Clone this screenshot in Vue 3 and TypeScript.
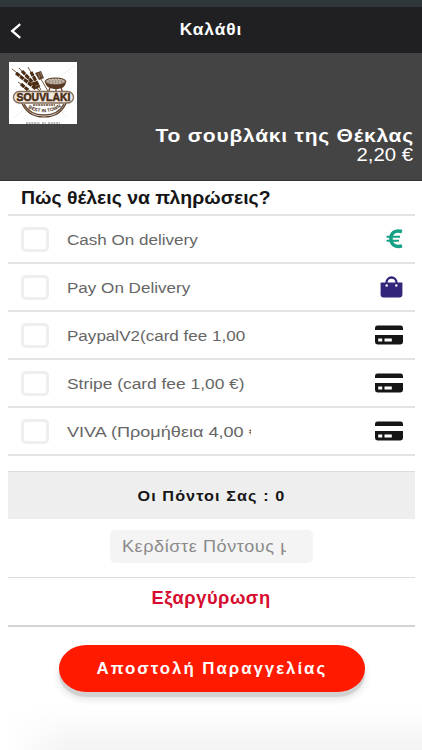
<script setup lang="ts">
type IconName = 'euro' | 'bag' | 'card'

interface PaymentOption {
  id: string
  label: string
  icon: IconName
}

const options: PaymentOption[] = [
  { id: 'cash', label: 'Cash On delivery', icon: 'euro' },
  { id: 'pay', label: 'Pay On Delivery', icon: 'bag' },
  { id: 'paypal', label: 'PaypalV2(card fee 1,00', icon: 'card' },
  { id: 'stripe', label: 'Stripe (card fee 1,00 €)', icon: 'card' },
  { id: 'viva', label: 'VIVA (Προμήθεια 4,00 €)', icon: 'card' },
]
</script>

<template>
  <main class="screen">
    <div class="status"></div>
    <header class="nav">
      <svg class="back" width="12" height="16" viewBox="0 0 12 16">
        <path d="M10.200 1.200 2.200 8l8 6.800" fill="none" stroke="#fff" stroke-width="2.300" />
      </svg>
      <h1 class="nav-title"><span class="t">Καλάθι</span></h1>
    </header>

    <section class="hero">
      <svg class="logo" width="68" height="62" viewBox="0 0 68 62">
        <rect width="68" height="62" fill="#fff" />
        <path d="M66 3 48 17M5 56l10-9M58 55l-8-7" stroke="#e9e7e5" stroke-width=".7" />
        <g stroke="#745a42" stroke-width="1" fill="none">
          <path d="M3 7 31 29M10 6l21 23M19 5l13 23M9 20l12 9M30 14l9 15" />
        </g>
        <g stroke="#4b2c14" stroke-width="3.200" stroke-dasharray="4.500 .7" fill="none">
          <path d="m7 11 20 16M13 9l16 17M22 10l8 15M12 22l7 6" />
        </g>
        <path d="m26 11 6-2 3 7-5 2z" fill="#5b3c25" />
        <path d="m29 11 2 5M31 10l2 5" stroke="#b5a596" stroke-width=".6" />
        <path d="M36 20h21c-1 5-4 7-10 7s-10-2-11-7z" fill="#583821" />
        <ellipse cx="46.500" cy="19.500" rx="10.500" ry="3.500" fill="#a49687" stroke="#583821" />
        <path d="M38 19h17M40 17.500h13M41 21h12" stroke="#e1dad2" stroke-width=".7" stroke-dasharray="2 1" />
        <path d="m41 26-2 5M47 27v4M52 26l2 5" stroke="#583821" stroke-width="1.200" />
        <path d="M12 39c4 11 12 16 23 16s19-5 23-16z" fill="#fff" stroke="#5b3c25" stroke-width="1.200" />
        <path d="M15 42c4 8 11 11 20 11s16-3 20-11" fill="none" stroke="#6c503a" stroke-width="1.600" />
        <path d="M24 43h22" stroke="#8b7664" stroke-width="2" stroke-dasharray="2 .6" />
        <rect x="4.500" y="29.500" width="60" height="11.500" rx="5.700" fill="#eee9e3" stroke="#846c57" stroke-width="1.300" />
        <text x="7.500" y="39" textLength="54" lengthAdjust="spacingAndGlyphs" class="logo-name">SOUVLAKI</text>
        <path id="ribbon" d="M19 46q16 9 33-1" fill="none" />
        <text class="logo-tag"><textPath href="#ribbon">BEST IN TOWN</textPath></text>
        <path d="M17 61h14M33 61h4M39 61h12" stroke="#777" stroke-width="1" stroke-dasharray="2 .7" />
      </svg>
      <div class="item">
        <h2 class="item-name"><span class="t">Το σουβλάκι της Θέκλας</span></h2>
        <p class="item-price"><span class="t">2,20 €</span></p>
      </div>
    </section>

    <section class="payments">
      <h3 class="question"><span class="t">Πώς θέλεις να πληρώσεις?</span></h3>
      <ul class="options">
        <li v-for="option in options" :key="option.id" class="option" :class="option.id">
          <span class="box"></span>
          <span class="label"><span class="t">{{ option.label }}</span></span>
          <svg v-if="option.icon === 'euro'" class="icon" width="17" height="20" viewBox="0 0 17 20">
            <path d="M16 2.500C9 .5 4.900 3.800 4.900 9.500S9 18.800 16 16.900" fill="none" stroke="#16a085" stroke-width="3.500" />
            <path d="M.6 7.700H14M.6 11.800H13" stroke="#16a085" stroke-width="2" />
          </svg>
          <svg v-else-if="option.icon === 'bag'" class="icon" width="23" height="22" viewBox="0 0 23 22">
            <path d="M6.500 10V6.500a5 5 0 0 1 10 0V10" fill="none" stroke="#33267a" stroke-width="2.300" />
            <path d="M1.400 6.500h20.200q.8 0 .8.800v11.200q0 3-3 3H3.600q-3 0-3-3V7.300q0-.8.8-.8z" fill="#33267a" />
            <circle cx="6.700" cy="9.500" r="1.200" fill="#fff" />
            <circle cx="16.300" cy="9.500" r="1.200" fill="#fff" />
          </svg>
          <svg v-else class="icon card" width="28" height="20" viewBox="0 0 28 20">
            <path d="M0 5V3Q0 .6 2.500.6h23Q28 .6 28 3v2z" fill="#161617" />
            <path d="M0 10h28v7q0 2.400-2.500 2.400h-23Q0 19.400 0 17z" fill="#161617" />
            <path d="M3.200 13.500h4v2.900h-4zM9.500 13.500h7.300v2.900H9.500z" fill="#fff" />
          </svg>
        </li>
      </ul>
    </section>

    <section class="points">
      <div class="balance"><span class="t">Οι Πόντοι Σας : 0</span></div>
      <div class="field"><div class="clip"><span class="t">Κερδίστε Πόντους με</span></div></div>
      <div class="redeem"><span class="t">Εξαργύρωση</span></div>
    </section>

    <footer class="footer">
      <button class="submit" type="button"><span class="t">Αποστολή Παραγγελίας</span></button>
    </footer>
  </main>
</template>

<style>
body {
  margin: 0;
  background: #fff;
}
</style>

<style scoped>
.screen {
  width: 422px;
  height: 750px;
  display: flex;
  flex-direction: column;
  overflow: hidden;
  box-sizing: border-box;
  background: #fff;
  color: #161617;
  font-family: "Liberation Sans", Arial, sans-serif;
}
h1, h2, h3, p, ul {
  margin: 0;
  padding: 0;
}
.t {
  display: inline-block;
  white-space: nowrap;
}
.status {
  flex: none;
  height: 7px;
  background: #30373b;
}
.nav {
  flex: none;
  height: 46px;
  display: grid;
  grid-template-columns: 40px 1fr 40px;
  align-items: center;
  background: #202022;
  color: #fff;
}
.back {
  margin: 2px 0 0 10px;
}
.nav-title {
  padding-left: 1px;
  text-align: center;
  font-size: 16px;
  line-height: 20px;
  letter-spacing: 0.9px;
}
.nav-title .t {
  transform: scaleX(1.08);
}
.hero {
  flex: none;
  height: 128px;
  box-sizing: border-box;
  padding: 9px 8px 0 9px;
  background: #444;
  color: #fff;
  border-bottom: 1px solid #333;
}
.logo {
  display: block;
}
.logo-name {
  font: bold 10px "Liberation Sans", Arial, sans-serif;
  fill: #4b2c14;
  stroke: #4b2c14;
  stroke-width: 0.5px;
}
.logo-tag {
  font: bold 4.800px "Liberation Sans", Arial, sans-serif;
  fill: #4b2c14;
}
.item {
  text-align: right;
}
.item .t {
  transform-origin: right;
}
.item-name {
  height: 20px;
  margin-top: 1px;
  font-size: 19px;
  line-height: 22px;
  letter-spacing: 0.7px;
}
.item-name .t {
  transform: scaleX(1.105);
}
.item-price {
  padding-right: 1px;
  font-size: 18px;
  line-height: 20px;
}
.item-price .t {
  transform: scaleX(1.13);
}
.payments {
  flex: none;
  padding: 0 7px 0 8px;
}
.question {
  height: 33px;
  padding-left: 13px;
  font-size: 18px;
  line-height: 34px;
}
.question .t {
  transform: scaleX(1.08);
  transform-origin: left;
}
.options {
  list-style: none;
}
.option {
  height: 48px;
  box-sizing: border-box;
  border-top: 2px solid #e3e3e3;
  padding: 0 12px 0 13px;
  display: flex;
  align-items: center;
}
.option:last-child {
  height: 50px;
  border-bottom: 2px solid #e3e3e3;
}
.box {
  flex: none;
  width: 28px;
  height: 25px;
  box-sizing: border-box;
  border: 3px solid #eee;
  border-radius: 5px;
}
.label {
  width: 184px;
  margin-left: 18px;
  overflow: hidden;
  font-size: 15.500px;
  line-height: 22px;
  padding-top: 1px;
  color: #666;
}
.label .t {
  transform: scaleX(1.1);
  transform-origin: left;
}
.stripe .t {
  transform: scaleX(1.12);
}
.viva .t {
  transform: scaleX(1.167);
}
.icon {
  flex: none;
  margin-left: auto;
}
.points {
  flex: none;
  margin: 15px 7px 0 8px;
  display: flex;
  flex-direction: column;
  align-items: center;
}
.balance {
  align-self: stretch;
  height: 48px;
  box-sizing: border-box;
  border-top: 1px solid #ddd;
  background: #eee;
  text-align: center;
  font-size: 15px;
  font-weight: bold;
  line-height: 48px;
  letter-spacing: 1px;
}
.balance .t {
  transform: scaleX(1.08);
}
.field {
  width: 203px;
  height: 33px;
  box-sizing: border-box;
  margin: 11px 0 14px;
  padding: 0 27px 0 12px;
  border-radius: 5px;
  background: #f4f4f4;
  color: #8b8b8b;
  font-size: 16px;
  line-height: 34px;
  letter-spacing: 0.5px;
}
.clip {
  overflow: hidden;
}
.clip .t {
  transform: scaleX(1.13);
  transform-origin: left;
}
.redeem {
  align-self: stretch;
  height: 50px;
  box-sizing: border-box;
  border-top: 1px solid #ddd;
  border-bottom: 2px solid #d4d4d4;
  color: #d70b2e;
  text-align: center;
  font-size: 17.500px;
  font-weight: bold;
  line-height: 41px;
  letter-spacing: 0.5px;
}
.redeem .t {
  transform: scaleX(1.045);
}
.footer {
  flex: 1;
  display: flex;
  justify-content: center;
  align-items: flex-start;
  padding-top: 18px;
  background: linear-gradient(to right, #fff 5px, transparent 70px), linear-gradient(#fff 80px, #f3f3f3 123px);
}
.submit {
  width: 306px;
  height: 47px;
  margin-left: 2px;
  padding: 0;
  border: 0;
  border-radius: 28px / 24px;
  background: #ff1a00;
  box-shadow: 0 5px 1px #d2d2d2, 0 7px 9px rgba(0, 0, 0, 0.12);
  color: #fff;
  font: bold 16px/47px "Liberation Sans", Arial, sans-serif;
  letter-spacing: 1.900px;
}
.submit .t {
  transform: scaleX(1.05);
}
</style>
